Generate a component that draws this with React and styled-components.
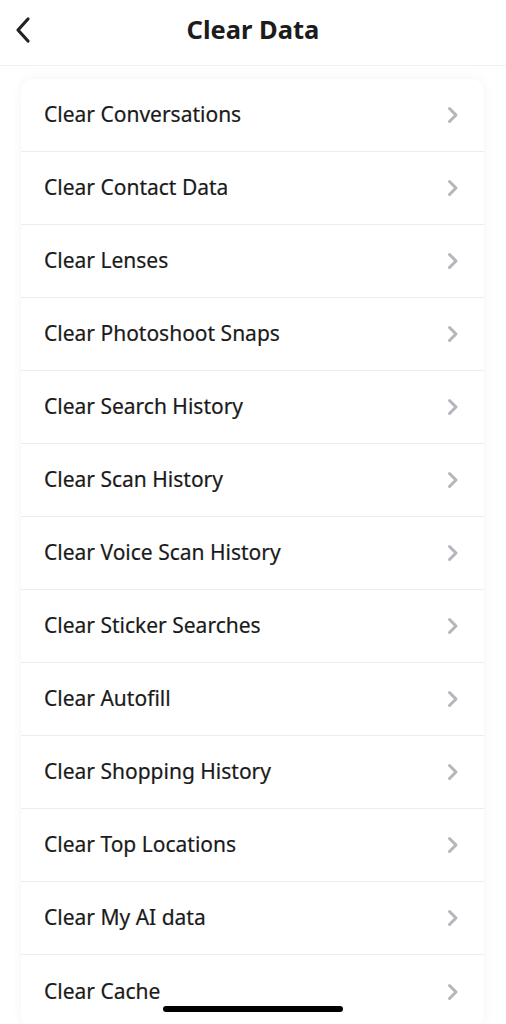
import styled, { createGlobalStyle } from "styled-components";

const items = [
    "Clear Conversations",
    "Clear Contact Data",
    "Clear Lenses",
    "Clear Photoshoot Snaps",
    "Clear Search History",
    "Clear Scan History",
    "Clear Voice Scan History",
    "Clear Sticker Searches",
    "Clear Autofill",
    "Clear Shopping History",
    "Clear Top Locations",
    "Clear My AI data",
    "Clear Cache",
];

export default function App(){
    return (
        <>
            <GlobalStyle />
            <StylePage>
                <StyleHeader>
                    <BackButton aria-label="Back">
                        <svg width="22" height="28" viewBox="0 0 22 28" fill="none">
                            <path d="M15 3 L5 14 L15 25" stroke="#222" strokeWidth="3.2" strokeLinecap="round" strokeLinejoin="round" />
                        </svg>
                    </BackButton>
                    <h1>Clear Data</h1>
                </StyleHeader>
                <Card>
                    {items.map((label, index) => (
                        <Row key={index} last={index === items.length - 1}>
                            <p>{label}</p>
                            <Chevron />
                        </Row>
                    ))}
                </Card>
            </StylePage>
            <HomeBar />
        </>
    );
}

function Chevron(){
    return (
        <svg width="16" height="20" viewBox="0 0 16 20" fill="none">
            <path d="M4.5 3.5 L11 10 L4.5 16.5" stroke="#b3b6bb" strokeWidth="3" strokeLinecap="round" strokeLinejoin="round" />
        </svg>
    );
}

const GlobalStyle = createGlobalStyle`
    body{
        margin:0;
        background:#FFFFFF;
        font-family: 'Noto Sans', 'Open Sans', sans-serif;
    }
    *{
        box-sizing:border-box;
    }
`;

const StylePage = styled.div`
    width:100%;
    height:1024px;
    overflow:hidden;
    background:#FFFFFF;
`;

const StyleHeader = styled.div`
    position:relative;
    height:66px;
    display:flex;
    align-items:center;
    justify-content:center;
    border-bottom:1px solid #f2f2f2;

    h1{
        margin:0;
        padding-bottom:8px;
        font-weight:700;
        font-size:25.5px;
        color:#1c1c1c;
    }
`;

const BackButton = styled.div`
    position:absolute;
    left:13px;
    top:16px;
    display:flex;
`;

const Card = styled.div`
    margin:13px 22px 0 21px;
    background:#FFFFFF;
    border-radius:12px;
    box-shadow:0 0 12px rgba(0,0,0,0.05);
`;

const Row = styled.div`
    position:relative;
    display:flex;
    align-items:center;
    justify-content:space-between;
    height:73px;
    padding:0 23px 0 23px;
    border-bottom:${props => props.last ? "none" : "1px solid #ececec"};

    &::after{
        content:"";
        display:${props => props.last ? "none" : "block"};
        position:absolute;
        left:-21px;
        right:-22px;
        bottom:0;
        height:1px;
        background:#f4f4f4;
        z-index:-1;
    }

    p{
        margin:0;
        padding-bottom:2px;
        font-weight:400;
        font-size:21px;
        color:#1a1a1a;
        -webkit-text-stroke:0.2px #1a1a1a;
    }
`;

const HomeBar = styled.div`
    position:fixed;
    left:163px;
    top:1006px;
    width:180px;
    height:6px;
    border-radius:3px;
    background:#000000;
`;
